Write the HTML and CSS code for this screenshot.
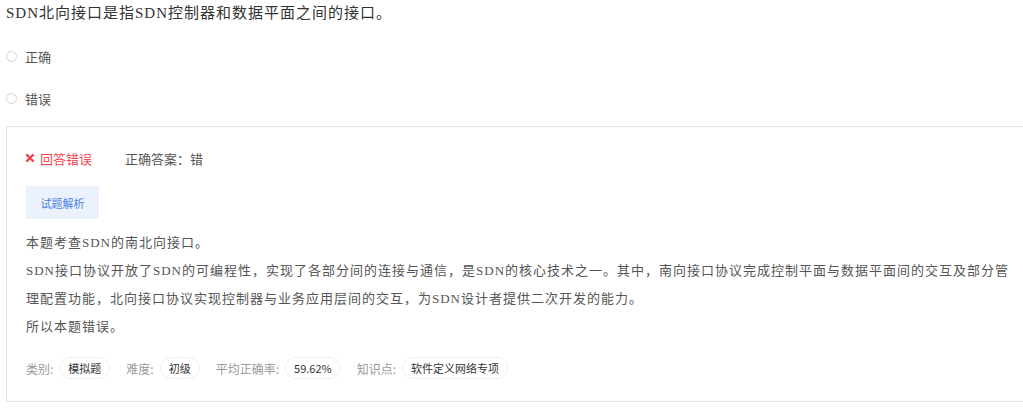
FILE: index.html
```html
<!DOCTYPE html>
<html>
  <head>
    <title>试题</title>
    <link rel="stylesheet" href="styles.css">
  </head>
  <body>
    <div class="question">
      <p class="stem">SDN北向接口是指SDN控制器和数据平面之间的接口。</p>
      <ul class="options">
        <li><span class="radio"></span>正确</li>
        <li><span class="radio"></span>错误</li>
      </ul>
      <div class="result">
        <div class="verdict">
          <span class="wrong">
            <svg width="8" height="8" viewBox="0 0 8 8">
              <path d="M1 1L7 7M7 1L1 7" stroke="#f5454f" stroke-width="2.4" stroke-linecap="square" />
            </svg>
            回答错误
          </span>
          <span class="answer">正确答案：错</span>
        </div>
        <button class="tab">试题解析</button>
        <div class="analysis">
          <p>本题考查SDN的南北向接口。</p>
          <p>SDN接口协议开放了SDN的可编程性，实现了各部分间的连接与通信，是SDN的核心技术之一。其中，南向接口协议完成控制平面与数据平面间的交互及部分管理配置功能，北向接口协议实现控制器与业务应用层间的交互，为SDN设计者提供二次开发的能力。</p>
          <p>所以本题错误。</p>
        </div>
        <div class="meta">
          <span class="label">类别:</span><span class="tag">模拟题</span>
          <span class="label">难度:</span><span class="tag">初级</span>
          <span class="label">平均正确率:</span><span class="tag">59.62%</span>
          <span class="label">知识点:</span><span class="tag">软件定义网络专项</span>
        </div>
      </div>
    </div>
  </body>
</html>
```

FILE: styles.css
```css
body {
  margin: 0;
  overflow-x: hidden;
  background-color: #fff;
  font-family: "Noto Sans CJK SC", sans-serif;
}

.question {
  padding-left: 6px;
}

.stem {
  margin: 0;
  padding-top: 3px;
  font-family: "Liberation Serif", "Noto Sans CJK SC", serif;
  font-size: 15px;
  line-height: 20px;
  letter-spacing: 1px;
  color: #333;
}

.options {
  list-style: none;
  margin: 0;
  padding: 0;
}
.options li {
  display: flex;
  align-items: center;
  height: 42px;
  font-size: 13px;
  color: #555;
}
.options li:first-child {
  margin-top: 12px;
}
.radio {
  width: 9px;
  height: 9px;
  border: 1px solid #d2d2d2;
  border-radius: 50%;
  margin-right: 8px;
}

.result {
  width: 992px;
  margin-top: 7px;
  padding: 19px 19px 22px 19px;
  border: 1px solid #e3e3e3;
}

.verdict {
  display: flex;
  align-items: center;
  height: 24px;
  font-size: 13px;
}
.wrong {
  display: flex;
  align-items: center;
  gap: 6px;
  color: #f5454f;
  width: 99px;
}
.answer {
  color: #555;
}

.tab {
  display: block;
  margin-top: 16px;
  width: 73px;
  height: 33px;
  padding: 0;
  border: none;
  background-color: #ebf1fd;
  color: #4d7fe8;
  font-family: "Noto Sans CJK SC", sans-serif;
  font-size: 11px;
}

.analysis {
  margin-top: 10px;
  font-family: "Liberation Serif", "Noto Sans CJK SC", serif;
  font-size: 13px;
  line-height: 28px;
  letter-spacing: 1px;
  color: #555;
}
.analysis p {
  margin: 0;
}

.meta {
  display: flex;
  align-items: center;
  margin-top: 16px;
  font-size: 11px;
}
.label {
  font-size: 12px;
  color: #999;
  margin-right: 6px;
}
.tag {
  height: 20px;
  line-height: 20px;
  padding: 0 8px;
  border: 1px solid #eee;
  border-radius: 11px;
  color: #333;
  margin-right: 16px;
}
```
